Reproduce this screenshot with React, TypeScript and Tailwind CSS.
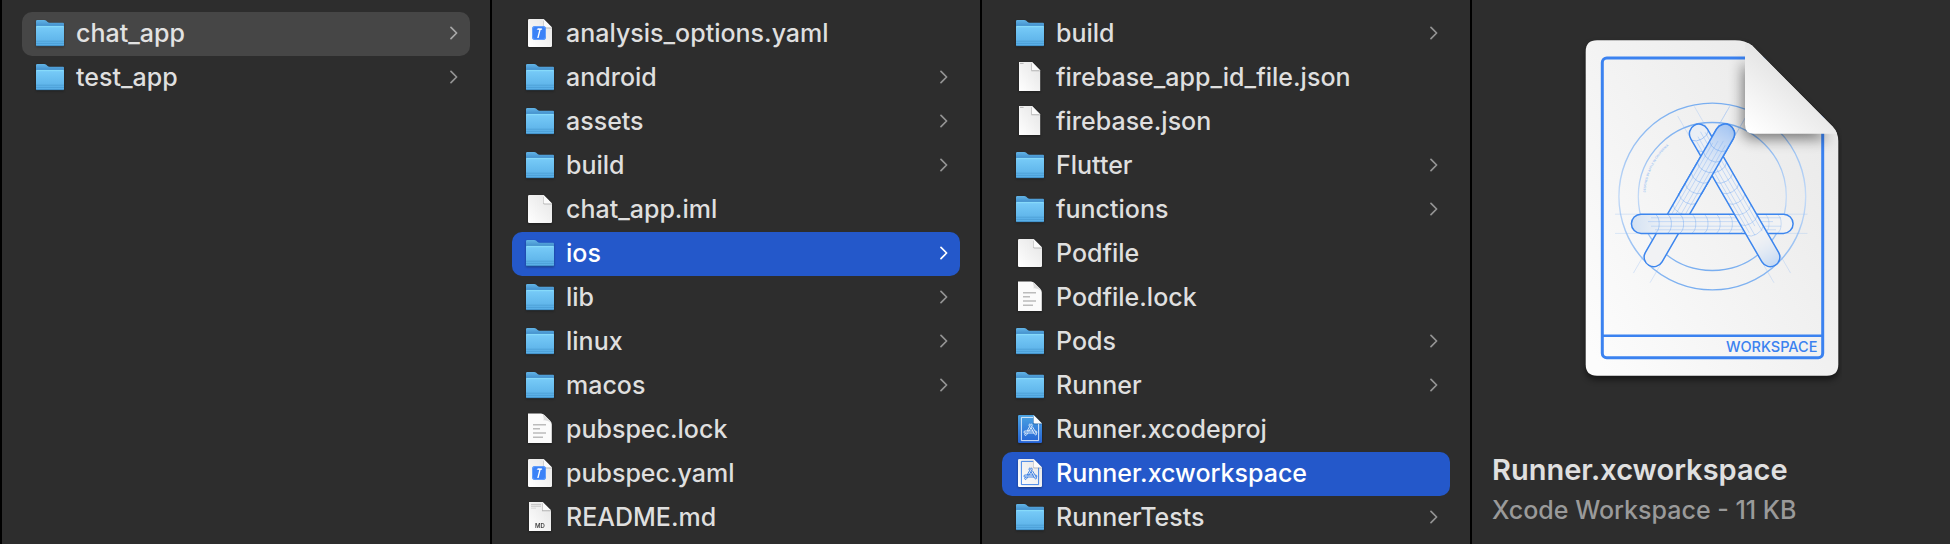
import { useState } from "react";
import type { ReactNode } from "react";

type Kind = "folder" | "blank" | "yaml" | "text" | "json" | "md" | "project" | "workspace";
type Entry = { name: string; kind: Kind };

const root: Entry[] = [
  { name: "chat_app", kind: "folder" },
  { name: "test_app", kind: "folder" },
];

const project: Entry[] = [
  { name: "analysis_options.yaml", kind: "yaml" },
  { name: "android", kind: "folder" },
  { name: "assets", kind: "folder" },
  { name: "build", kind: "folder" },
  { name: "chat_app.iml", kind: "blank" },
  { name: "ios", kind: "folder" },
  { name: "lib", kind: "folder" },
  { name: "linux", kind: "folder" },
  { name: "macos", kind: "folder" },
  { name: "pubspec.lock", kind: "text" },
  { name: "pubspec.yaml", kind: "yaml" },
  { name: "README.md", kind: "md" },
];

const ios: Entry[] = [
  { name: "build", kind: "folder" },
  { name: "firebase_app_id_file.json", kind: "json" },
  { name: "firebase.json", kind: "json" },
  { name: "Flutter", kind: "folder" },
  { name: "functions", kind: "folder" },
  { name: "Podfile", kind: "blank" },
  { name: "Podfile.lock", kind: "text" },
  { name: "Pods", kind: "folder" },
  { name: "Runner", kind: "folder" },
  { name: "Runner.xcodeproj", kind: "project" },
  { name: "Runner.xcworkspace", kind: "workspace" },
  { name: "RunnerTests", kind: "folder" },
];

/* Gradients and clip paths shared by every icon on the page. */
function Defs() {
  return (
    <svg width="0" height="0" className="absolute" aria-hidden="true">
      <defs>
        <linearGradient id="folderFront" x1="0" y1="0" x2="0" y2="1">
          <stop offset="0" stopColor="#7fd3fa" />
          <stop offset="0.12" stopColor="#74c8f6" />
          <stop offset="1" stopColor="#58aee6" />
        </linearGradient>
        <linearGradient id="folderBack" x1="0" y1="0" x2="0" y2="1">
          <stop offset="0" stopColor="#62b4e6" />
          <stop offset="0.3" stopColor="#3a86c6" />
        </linearGradient>
        <linearGradient id="paper" x1="1" y1="0" x2="0" y2="1">
          <stop offset="0" stopColor="#e4e4e4" />
          <stop offset="1" stopColor="#ffffff" />
        </linearGradient>
        <linearGradient id="projectBlue" x1="0" y1="0" x2="0" y2="1">
          <stop offset="0" stopColor="#4aa3e2" />
          <stop offset="1" stopColor="#2563d6" />
        </linearGradient>
      </defs>
    </svg>
  );
}

function FolderIcon() {
  return (
    <>
      <path d="M2 27.5V4.2Q2 3 3.2 3H10.2Q11.3 3 12 3.6L13.6 5Q14.4 5.8 15.6 5.8H29Q30 5.8 30 6.8V28.4H2Z" fill="url(#folderBack)" />
      <path d="M2 10Q2 9 3 9H29Q30 9 30 10V27.8Q30 29 28.8 29H3.2Q2 29 2 27.8Z" fill="url(#folderFront)" />
      <path d="M2.4 9.4H29.6" stroke="#8addfb" strokeWidth="0.8" />
      <path d="M2 24.2H30M2 26.4H30" stroke="#3f8fc9" strokeWidth="0.7" opacity="0.75" />
      <path d="M2.4 28.7H29.6" stroke="#357fb8" strokeWidth="0.7" />
    </>
  );
}

function Sheet({ fill = "url(#paper)" }: { fill?: string }) {
  return (
    <>
      <path d="M5.2 2H19.6L28 10.6V28.8Q28 30 26.8 30H5.2Q4 30 4 28.8V3.2Q4 2 5.2 2Z" fill={fill} />
      <path d="M19 3.2L28 11.4H20.4Q19 11.4 19 10Z" fill="#000" opacity="0.22" />
      <path d="M19.6 2L28 10.4H20.8Q19.6 10.4 19.6 9.2Z" fill="#fbfbfb" />
    </>
  );
}

function StickGlyph({ color }: { color: string }) {
  return (
    <g fill="none" stroke={color} strokeWidth="0.9" strokeLinecap="round" strokeLinejoin="round">
      <path d="M15 12.6Q14.6 11.2 15.8 11Q16.4 10.9 16.6 11.4Q17 10.8 17.8 11.2Q18.6 11.8 18 12.9L15.2 17.9H13.2L16.2 12.6" />
      <path d="M17.2 15L20.6 21.2Q21.4 22.3 22.3 21.6Q22.8 21 22.2 20L18.6 14" />
      <path d="M19 18H11Q9.8 18.2 9.8 19.1Q9.9 20 11 20H19.6M21.6 18Q23 18.2 23 19.1Q22.9 19.9 22 20" />
      <path d="M11.4 20.2L10.8 21.3Q10.5 22.3 11.4 22.5Q12.2 22.5 12.6 21.8L13.5 20.2" />
    </g>
  );
}

function EntryIcon({ kind }: { kind: Kind }) {
  let art: ReactNode;
  if (kind === "folder") art = <FolderIcon />;
  else if (kind === "blank") art = <Sheet />;
  else if (kind === "yaml")
    art = (
      <>
        <Sheet />
        <rect x="8" y="9" width="14" height="14" rx="3" fill="#3b82f7" />
        <rect x="8.5" y="9.5" width="13" height="13" rx="2.6" fill="none" stroke="#67a1fa" strokeWidth="0.9" />
        <path d="M12.6 12.6L14 11.3L18 11.5L18.2 12.6L16.6 13L14.6 21H13.2L15.2 13Z" fill="#fff" />
      </>
    );
  else if (kind === "text")
    art = (
      <>
        <path d="M4 0.4H17Q19 0.6 20.4 2L26.2 7.8Q27.8 9.4 27.8 11.4V30H4Z" fill="#fbfbfb" />
        <path d="M18.6 1.2Q20.4 5.4 19.4 7.4Q23.6 6.8 27.4 10.2L20.6 2.6Z" fill="#dcdcdc" />
        <path d="M9 11.7H22M9 15.8H16M9 20H22M9 24.2H19" stroke="#bcbcbc" strokeWidth="1.6" />
      </>
    );
  else if (kind === "json")
    art = (
      <>
        <path d="M5 1H18L26.2 9.4V30H5Z" fill="url(#paper)" />
        <path d="M6 2.4H9.6" stroke="#b4b4b4" strokeWidth="1" />
        <path d="M17.4 2L26.2 10.2H17.4Z" fill="#000" opacity="0.25" />
        <path d="M18 1L26.2 9.2H18Z" fill="#fbfbfb" />
      </>
    );
  else if (kind === "md")
    art = (
      <>
        <path d="M5 1H18.6L27 9.4V30H5Z" fill="url(#paper)" />
        <path d="M7 3.4H17M7 5.2H17" stroke="#bdbdbd" strokeWidth="0.9" />
        <path d="M7 7.2H12" stroke="#cfcfcf" strokeWidth="0.8" />
        <path d="M18 2L27 10.2H18Z" fill="#000" opacity="0.25" />
        <path d="M18.6 1L27 9.2H18.6Z" fill="#fbfbfb" />
        <text x="16" y="27" textAnchor="middle" fontSize="6" fontWeight="600" fill="#444">
          MD
        </text>
      </>
    );
  else {
    const blue = kind === "project";
    art = (
      <>
        <Sheet fill={blue ? "url(#projectBlue)" : "url(#paper)"} />
        <path d="M19.2 4.4H7.4V27.6H24.6V10.8" fill="none" stroke={blue ? "#e8f2fd" : "#2f78e4"} strokeWidth="0.9" />
        <StickGlyph color={blue ? "#e8f2fd" : "#2f78e4"} />
      </>
    );
  }
  return (
    <svg viewBox="0 0 32 32" className="size-8 shrink-0 overflow-visible drop-shadow-[0_1px_1px_rgba(0,0,0,0.35)]" aria-hidden="true">
      {art}
    </svg>
  );
}

function Column({ label, entries, selected, active }: { label: string; entries: Entry[]; selected: string; active: boolean }) {
  const [current, setCurrent] = useState(selected);
  return (
    <nav aria-label={label} className="border-l-2 border-black px-5 pt-3">
      <ul>
        {entries.map((entry) => {
          const on = entry.name === current;
          const tone = on ? (active ? "bg-[#2458ca] text-white" : "bg-[#464646] text-[#e2e2e2]") : "text-[#dfdfdf]";
          return (
            <li key={entry.name}>
              <button
                type="button"
                aria-pressed={on}
                onClick={() => setCurrent(entry.name)}
                className={`flex h-11 w-full items-center gap-2.5 rounded-[10px] pr-3 pb-0.5 pl-3 text-left text-[25px] leading-8 font-medium ${tone}`}
              >
                <EntryIcon kind={entry.kind} />
                <span className="min-w-0 flex-1 whitespace-nowrap">{entry.name}</span>
                {entry.kind === "folder" && (
                  <svg viewBox="0 0 8 14" className="h-3.5 w-2 shrink-0" fill="none" aria-hidden="true">
                    <path
                      d="M1 1.4L6.6 7L1 12.6"
                      stroke={on && active ? "#ffffff" : on ? "#a8a8a8" : "#949494"}
                      strokeWidth="1.7"
                      strokeLinecap="round"
                      strokeLinejoin="round"
                    />
                  </svg>
                )}
              </button>
            </li>
          );
        })}
      </ul>
    </nav>
  );
}

type StickProps = { x: number; y: number; angle: number; tint: string; ribsFrom: number; ribsTo: number };

/* One drafted stick, drawn along the x axis from its first cap centre. */
function Stick({ x, y, angle, tint, ribsFrom, ribsTo }: StickProps) {
  const r = 9.6;
  const length = 142.5;
  const ribs = Array.from({ length: 12 }, (_, i) => 2 + i * 12.2).filter((p) => p >= ribsFrom && p <= ribsTo);
  return (
    <g transform={`translate(${x} ${y}) rotate(${angle})`} fill="none">
      <path d={`M-26 ${-r}H${length + 24}M-26 ${r}H${length + 24}`} stroke="#8db9f5" strokeWidth="0.7" opacity="0.4" />
      <rect x={-r} y={-r} width={length + 2 * r} height={2 * r} rx={r} fill="#f1f2f4" />
      <rect x={-r} y={-r} width={length + 2 * r} height={2 * r} rx={r} fill={tint} />
      <path
        d={`M${ribsFrom} -6H${ribsTo}M${ribsFrom - 3} -2.2H${ribsTo - 8}M${ribsFrom} 2.4H${ribsTo}M${ribsFrom + 4} 6H${ribsTo - 5}`}
        stroke="#7fb0f4"
        strokeWidth="0.7"
        opacity="0.5"
      />
      {ribs.map((p) => (
        <path key={p} d={`M${p} ${-r}Q${p + 4} -7 ${p + 4} 0T${p} ${r}`} stroke="#6aa3f1" strokeWidth="0.8" opacity={0.6 - (p / length) * 0.25} />
      ))}
      <rect x={-r} y={-r} width={length + 2 * r} height={2 * r} rx={r} stroke="#3d86ee" strokeWidth="1.5" />
    </g>
  );
}

function WorkspaceArt() {
  const outline =
    "M17 10.3H155Q165 10.3 172 15.5L252.5 96.5Q258.3 102.5 258.3 111V334.5Q258.3 345.7 247 345.7H17Q5.7 345.7 5.7 334.5V21.5Q5.7 10.3 17 10.3Z";
  const rising = <Stick x={145} y={103.7} angle={120} tint="url(#tintStrong)" ribsFrom={10} ribsTo={104} />;
  return (
    <svg viewBox="0 0 262 360" className="h-90 w-[262px]" role="img" aria-label="Xcode workspace document">
      <defs>
        <linearGradient id="largePaper" x1="1" y1="0.1" x2="0" y2="0.9">
          <stop offset="0" stopColor="#e8e8e8" />
          <stop offset="1" stopColor="#fcfcfc" />
        </linearGradient>
        <linearGradient id="largeCurl" x1="0.55" y1="0.45" x2="0.1" y2="1">
          <stop offset="0" stopColor="#e6e6e6" />
          <stop offset="1" stopColor="#ffffff" />
        </linearGradient>
        <linearGradient id="tintStrong" x1="0" y1="0" x2="1" y2="0">
          <stop offset="0" stopColor="#8fb9f2" stopOpacity="0.8" />
          <stop offset="0.12" stopColor="#a9c9f5" stopOpacity="0.65" />
          <stop offset="0.3" stopColor="#d0e1f8" stopOpacity="0.4" />
          <stop offset="0.75" stopColor="#f1f2f4" stopOpacity="0" />
        </linearGradient>
        <linearGradient id="tintSoft" x1="0" y1="0" x2="1" y2="0">
          <stop offset="0" stopColor="#cfdff3" stopOpacity="0.9" />
          <stop offset="0.2" stopColor="#e4ecf6" stopOpacity="0.5" />
          <stop offset="0.9" stopColor="#f1f2f4" stopOpacity="0" />
        </linearGradient>
        <linearGradient id="tintEnd" x1="0" y1="0" x2="1" y2="0">
          <stop offset="0" stopColor="#e2ebf7" stopOpacity="0.6" />
          <stop offset="0.75" stopColor="#f1f2f4" stopOpacity="0" />
          <stop offset="1" stopColor="#bdd5f4" stopOpacity="0.9" />
        </linearGradient>
        <linearGradient id="ringFade" x1="0" y1="0" x2="0" y2="1">
          <stop offset="0" stopColor="#79aef0" />
          <stop offset="0.5" stopColor="#c4daf6" />
          <stop offset="1" stopColor="#79aef0" />
        </linearGradient>
        <clipPath id="pageClip">
          <path d={outline} />
        </clipPath>
        <clipPath id="upperHalf">
          <rect x="60" y="60" width="150" height="105" />
        </clipPath>
        <filter id="curlShadow" x="-50%" y="-50%" width="200%" height="200%">
          <feGaussianBlur stdDeviation="7" />
        </filter>
        <filter id="pageShadow" x="-10%" y="-10%" width="120%" height="120%">
          <feGaussianBlur stdDeviation="3" />
        </filter>
        <path id="mottoArc" d="M65.4 162.4A67 67 0 0 1 97 109.5" />
      </defs>
      <path d={outline} transform="translate(0 4)" fill="#000" opacity="0.5" filter="url(#pageShadow)" />
      <path d={outline} fill="url(#largePaper)" />
      <g clipPath="url(#pageClip)">
        <rect x="22.3" y="28" width="220.4" height="299.7" rx="4.5" fill="none" stroke="#3b82f0" strokeWidth="3" />
        <path d="M22.3 305.7H242.7" stroke="#3b82f0" strokeWidth="2.6" />
        <circle cx="132.3" cy="166.5" r="93.4" fill="none" stroke="url(#ringFade)" strokeWidth="1.4" />
        <circle cx="132.3" cy="166.5" r="74" fill="none" stroke="url(#ringFade)" strokeWidth="1.3" />
        <text fontSize="3" fontWeight="600" fill="#a3c5f3">
          <textPath href="#mottoArc">DESIGNED BY APPLE IN CALIFORNIA</textPath>
        </text>
        {rising}
        <Stick x={61} y={193.8} angle={0} tint="url(#tintSoft)" ribsFrom={10} ribsTo={140} />
        <Stick x={119} y={103.7} angle={60} tint="url(#tintEnd)" ribsFrom={2} ribsTo={116} />
        <g clipPath="url(#upperHalf)">{rising}</g>
        <path d="M165 26L252 103.7H174Q165 103.7 165 94Z" transform="translate(-2 5)" fill="#000" opacity="0.5" filter="url(#curlShadow)" />
      </g>
      <path d="M165 12.4Q168.6 12.6 172 15.5L252.5 96.5Q255.6 99.8 257 103.7H174Q165 103.7 165 94.7Z" fill="url(#largeCurl)" />
      <text x="237.5" y="322.3" textAnchor="end" fontSize="14.5" fontWeight="500" fill="#3b82f0">
        WORKSPACE
      </text>
    </svg>
  );
}

export default function App() {
  return (
    <main className="grid min-h-screen grid-cols-[49fr_49fr_49fr_48fr] bg-[#2d2d2d] font-[Inter,'Liberation_Sans',sans-serif] antialiased">
      <Defs />
      <Column label="Projects" entries={root} selected="chat_app" active={false} />
      <Column label="chat_app" entries={project} selected="ios" active />
      <Column label="ios" entries={ios} selected="Runner.xcworkspace" active />
      <section aria-label="Preview" className="border-l-2 border-black pt-[30px]">
        <div className="flex justify-center">
          <WorkspaceArt />
        </div>
        <div className="px-5 pt-[60px]">
          <h1 className="text-[29px] leading-10 font-semibold text-[#e0e0e0]">Runner.xcworkspace</h1>
          <p className="text-[25px] leading-10 font-medium text-[#9a9a9a]">Xcode Workspace - 11 KB</p>
        </div>
      </section>
    </main>
  );
}
